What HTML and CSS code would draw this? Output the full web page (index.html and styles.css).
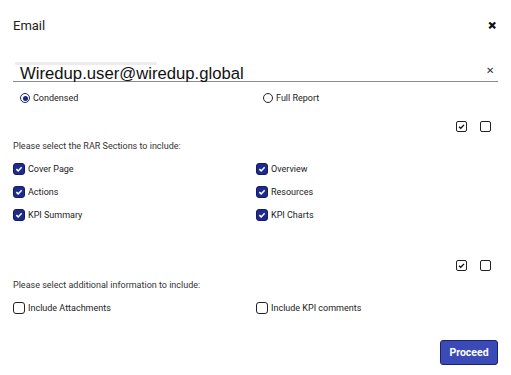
FILE: index.html
```html
<!DOCTYPE html>
<html lang="en">
<head>
  <meta charset="UTF-8" />
  <title>Email</title>
  <link rel="stylesheet" href="styles.css">
</head>
<body>
  <div class="dialog">
    <div class="header">
      <span class="title">Email</span>
      <span class="close">&#x2715;</span>
    </div>

    <div class="field">
      <div class="ghost"></div>
      <div class="input">
        <span class="value">Wiredup.user@wiredup.global</span>
        <span class="clear">&#x2715;</span>
      </div>
    </div>

    <div class="grid radios">
      <label class="opt"><span class="radio on"></span>Condensed</label>
      <label class="opt"><span class="radio"></span>Full Report</label>
    </div>

    <div class="toggles">
      <span class="mini on">
        <svg viewBox="0 0 10 10"><path d="M2.3 5.2 L4.2 7 L7.8 3.2" /></svg>
      </span>
      <span class="mini"></span>
    </div>
    <p class="hint">Please select the RAR Sections to include:</p>
    <div class="grid list">
      <label class="opt"><span class="box on"><svg viewBox="0 0 12 12"><path d="M2.8 6.2 L5 8.3 L9.2 3.8" /></svg></span>Cover Page</label>
      <label class="opt"><span class="box on"><svg viewBox="0 0 12 12"><path d="M2.8 6.2 L5 8.3 L9.2 3.8" /></svg></span>Overview</label>
      <label class="opt"><span class="box on"><svg viewBox="0 0 12 12"><path d="M2.8 6.2 L5 8.3 L9.2 3.8" /></svg></span>Actions</label>
      <label class="opt"><span class="box on"><svg viewBox="0 0 12 12"><path d="M2.8 6.2 L5 8.3 L9.2 3.8" /></svg></span>Resources</label>
      <label class="opt"><span class="box on"><svg viewBox="0 0 12 12"><path d="M2.8 6.2 L5 8.3 L9.2 3.8" /></svg></span>KPI Summary</label>
      <label class="opt"><span class="box on"><svg viewBox="0 0 12 12"><path d="M2.8 6.2 L5 8.3 L9.2 3.8" /></svg></span>KPI Charts</label>
    </div>

    <div class="toggles second">
      <span class="mini on">
        <svg viewBox="0 0 10 10"><path d="M2.3 5.2 L4.2 7 L7.8 3.2" /></svg>
      </span>
      <span class="mini"></span>
    </div>
    <p class="hint">Please select additional information to include:</p>
    <div class="grid list">
      <label class="opt"><span class="box"></span>Include Attachments</label>
      <label class="opt"><span class="box"></span>Include KPI comments</label>
    </div>

    <div class="actions">
      <button class="proceed">Proceed</button>
    </div>
  </div>
</body>
</html>
```

FILE: styles.css
```css
* { margin: 0; padding: 0; box-sizing: border-box; }
body {
  font-family: Roboto, "Liberation Sans", sans-serif;
  background: #fff;
  color: #222;
}
.dialog {
  width: 511px;
  height: 375px;
  padding: 17px 13px 0 13px;
  display: flex;
  flex-direction: column;
}
.header {
  display: flex;
  justify-content: space-between;
  align-items: center;
  height: 16px;
}
.title { font-size: 13px; color: #222; }
.close {
  font-size: 10px;
  font-weight: bold;
  color: #111;
  margin-right: 2px;
  -webkit-text-stroke: 0.6px #111;
}
.field { margin-top: 29px; }
.ghost {
  width: 142px;
  height: 3px;
  margin-left: 2px;
  background: #ececec;
  border-radius: 2px;
}
.input {
  display: flex;
  justify-content: space-between;
  align-items: flex-end;
  height: 17px;
  border-bottom: 1px solid #8a8a8a;
}
.value {
  font-family: "Liberation Sans", Arial, sans-serif;
  font-size: 16.7px;
  line-height: 17px;
  margin-left: 7px;
  margin-bottom: -1px;
  color: #111;
}
.clear {
  font-size: 10px;
  color: #333;
  margin-right: 4px;
  margin-bottom: 5px;
}
.grid {
  display: grid;
  grid-template-columns: 243px 1fr;
}
.radios { margin-top: 10px; padding-left: 7px; }
.opt {
  display: flex;
  align-items: center;
  font-size: 9px;
  color: #222;
  height: 12px;
}
.radio {
  width: 10px;
  height: 10px;
  border: 1.3px solid #222;
  border-radius: 50%;
  margin-right: 3px;
  position: relative;
}
.radio.on { border-color: #1a237e; }
.radio.on::after {
  content: "";
  position: absolute;
  inset: 1.5px;
  border-radius: 50%;
  background: #1a237e;
}
.toggles {
  display: flex;
  justify-content: flex-end;
  gap: 13px;
  margin-top: 17px;
  padding-right: 7px;
}
.toggles.second { margin-top: 39px; }
.mini {
  width: 11px;
  height: 11px;
  border: 1.3px solid #222;
  border-radius: 2px;
  display: flex;
}
.mini svg { width: 100%; height: 100%; }
.mini path { fill: none; stroke: #111; stroke-width: 1.5; }
.hint {
  font-size: 9px;
  color: #333;
  margin-top: 8px;
  height: 12px;
  line-height: 12px;
}
.list { row-gap: 11px; margin-top: 11px; }
.box {
  width: 12px;
  height: 12px;
  border: 1.3px solid #222;
  border-radius: 3px;
  margin-right: 3px;
  display: flex;
  flex-shrink: 0;
}
.box.on { background: #1e2a8c; border-color: #141b66; }
.box svg { width: 100%; height: 100%; }
.box path { fill: none; stroke: #fff; stroke-width: 1.8; }
.actions {
  display: flex;
  justify-content: flex-end;
  margin-top: 26px;
}
.proceed {
  width: 58px;
  height: 25px;
  background: #3a4bb8;
  border: 1px solid #1b2266;
  border-radius: 3px;
  color: #fff;
  font-family: Roboto, "Liberation Sans", sans-serif;
  font-size: 10.5px;
  font-weight: bold;
}
```
